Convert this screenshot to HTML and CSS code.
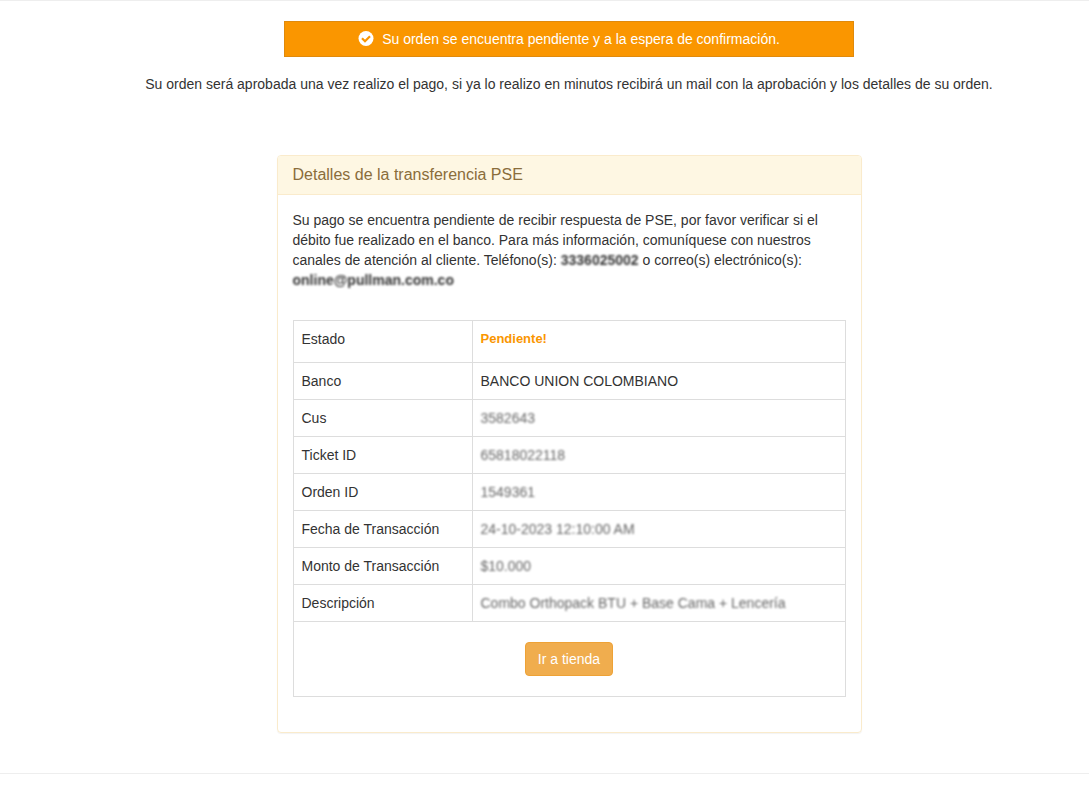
FILE: index.html
```html
<!DOCTYPE html>
<html lang="es">
<head>
<meta charset="utf-8">
<meta name="viewport" content="width=device-width, initial-scale=1">
<title>Detalles de la transferencia PSE</title>
<link rel="stylesheet" href="styles.css">
</head>
<body>
<main class="page">
  <div class="alert" role="status">
    <svg class="alert-icon" viewBox="0 0 16 16" aria-hidden="true">
      <circle cx="8" cy="7.5" r="7.5" fill="#fff"/>
      <path d="M4 7.2 7 10.2 12 5.2" fill="none" stroke="#fa9600" stroke-width="2.2"/>
    </svg>
    <span>Su orden se encuentra pendiente y a la espera de confirmación.</span>
  </div>
  <p class="intro">Su orden será aprobada una vez realizo el pago, si ya lo realizo en minutos recibirá un mail con la aprobación y los detalles de su orden.</p>
  <section class="panel">
    <h1 class="panel-heading">Detalles de la transferencia PSE</h1>
    <div class="panel-body">
      <p class="notice">Su pago se encuentra pendiente de recibir respuesta de PSE, por favor verificar si el débito fue realizado en el banco. Para más información, comuníquese con nuestros canales de atención al cliente. Teléfono(s): <strong class="masked">3336025002</strong> o correo(s) electrónico(s): <strong class="masked">online@pullman.com.co</strong></p>
      <table class="details">
        <tbody>
          <tr class="status-row"><th scope="row">Estado</th><td><strong class="status">Pendiente!</strong></td></tr>
          <tr><th scope="row">Banco</th><td>BANCO UNION COLOMBIANO</td></tr>
          <tr><th scope="row">Cus</th><td><span class="masked">3582643</span></td></tr>
          <tr><th scope="row">Ticket ID</th><td><span class="masked">65818022118</span></td></tr>
          <tr><th scope="row">Orden ID</th><td><span class="masked">1549361</span></td></tr>
          <tr><th scope="row">Fecha de Transacción</th><td><span class="masked">24-10-2023 12:10:00 AM</span></td></tr>
          <tr><th scope="row">Monto de Transacción</th><td><span class="masked">$10.000</span></td></tr>
          <tr><th scope="row">Descripción</th><td><span class="masked">Combo Orthopack BTU + Base Cama + Lencería</span></td></tr>
          <tr><td class="actions" colspan="2"><button class="button" type="button">Ir a tienda</button></td></tr>
        </tbody>
      </table>
    </div>
  </section>
</main>
</body>
</html>
```
FILE: styles.css
```css
* {
  box-sizing: border-box;
}

body {
  margin: 0;
  background: #fff;
  color: #333;
  font: 14px/20px "Liberation Sans", Arial, sans-serif;
}

.page {
  display: flex;
  flex-direction: column;
  align-items: center;
  padding: 20px 0 40px 49px;
  border-top: 1px solid #eee;
  border-bottom: 1px solid #eee;
}

.alert {
  display: flex;
  align-items: center;
  justify-content: center;
  gap: 8px;
  width: 100%;
  max-width: 570px;
  padding: 7px;
  border: 1px solid #e08a0c;
  background: #fa9600;
  color: #fff;
}

.alert-icon {
  flex: none;
  width: 16px;
  height: 16px;
}

.intro {
  margin: 17px 0 61px;
  text-align: center;
}

.panel {
  width: 100%;
  max-width: 585px;
  border: 1px solid #faebcc;
  border-radius: 4px;
  box-shadow: 0 1px 1px rgba(0, 0, 0, 0.05);
}

.panel-heading {
  margin: 0;
  padding: 10px 15px;
  border-bottom: 1px solid #faebcc;
  border-radius: 3px 3px 0 0;
  background: #fef7e3;
  color: #8a6d3b;
  font-size: 16px;
  font-weight: 400;
  line-height: 18px;
}

.panel-body {
  padding: 15px 15px 35px;
}

.notice {
  margin: 0 0 30px;
}

.masked {
  filter: blur(1px);
}

.details {
  width: 100%;
  border-collapse: collapse;
}

.details th,
.details td {
  padding: 8px;
  border: 1px solid #ddd;
  text-align: left;
  vertical-align: top;
  font-weight: 400;
}

.details th {
  width: 179px;
}

.details .masked {
  color: #666;
}

.details .status-row th,
.details .status-row td {
  padding-bottom: 13px;
}

.status {
  display: block;
  color: #fa9600;
  font-size: 13px;
}

.details .actions {
  padding: 20px 8px;
  text-align: center;
}

.button {
  display: inline-block;
  padding: 6px 12px;
  border: 1px solid #eea236;
  border-radius: 4px;
  background: #f0ad4e;
  color: #fff;
  font: inherit;
  vertical-align: middle;
  cursor: pointer;
}
```
